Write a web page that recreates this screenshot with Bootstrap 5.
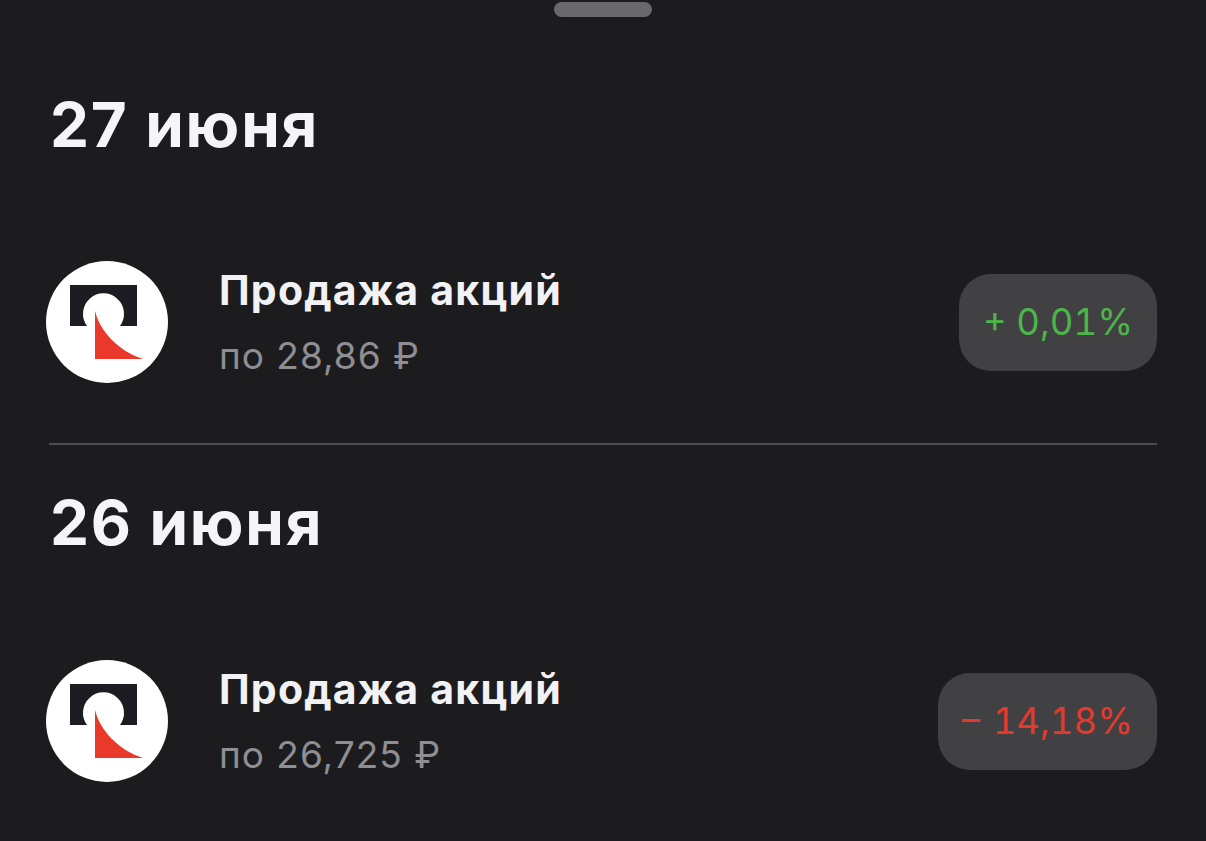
<!doctype html>
<html lang="ru">

<head>
    <meta charset="utf-8" />
    <meta name="viewport" content="width=device-width, initial-scale=1" />
    <title>Операции</title>
    <link href="https://cdn.jsdelivr.net/npm/bootstrap@5.3.5/dist/css/bootstrap.min.css" rel="stylesheet" />
    <style>
        body {
            background-color: #1c1c1e;
            font-family: Inter, "Noto Sans", sans-serif;
            overflow: hidden;
        }

        .sheet {
            height: 841px;
            padding: 0 49px;
        }

        .grabber {
            width: 98px;
            height: 15px;
            margin: 2px auto 0;
            background-color: #69696c;
            border-radius: 8px;
        }

        .day-title {
            font-size: 62px;
            line-height: 70px;
            font-weight: 700;
            letter-spacing: 1.8px;
            color: #f5f5f7;
            margin: 0 0 0 1px;
        }

        .first-title {
            padding-top: 73px;
        }

        .deal {
            margin-top: 101px;
            height: 122px;
            margin-left: -3px;
        }

        .second-title {
            margin-top: 43px;
        }

        .second-deal {
            margin-top: 102px;
        }

        .deal-logo {
            width: 122px;
            height: 122px;
            flex-shrink: 0;
        }

        .deal-info {
            margin-left: 51px;
        }

        .deal-name {
            font-size: 41px;
            line-height: 46px;
            font-weight: 700;
            letter-spacing: 1.2px;
            color: #f2f2f4;
        }

        .deal-price {
            font-size: 37px;
            line-height: 44px;
            letter-spacing: 1px;
            color: #8e8e93;
            margin-top: 21px;
        }

        .change-pill {
            height: 97px;
            padding: 0 24px;
            border-radius: 32px;
            background-color: #414143;
            font-size: 36.5px;
            font-variant-numeric: tabular-nums;
        }

        .change-up {
            color: #4cb648;
        }

        .change-down {
            color: #e5392e;
            word-spacing: 3px;
        }

        .day-line {
            height: 2px;
            margin-top: 60px;
            background-color: #4c4c4e;
        }
    </style>
</head>

<body>
    <div class="sheet">
        <div class="grabber"></div>

        <h2 class="day-title first-title">27 июня</h2>
        <div class="deal d-flex align-items-center">
            <svg class="deal-logo" viewBox="0 0 122 122">
                <circle cx="61" cy="61" r="61" fill="#fff" />
                <path d="M24 24H91V65H74A20.5 20.5 0 1 0 41 65H24Z" fill="#1c1c22" />
                <path d="M49 50C54 70 72 90 97 98H49Z" fill="#e8392a" />
            </svg>
            <div class="deal-info flex-grow-1">
                <div class="deal-name">Продажа акций</div>
                <div class="deal-price">по 28,86 ₽</div>
            </div>
            <div class="change-pill change-up d-flex align-items-center">+ 0,01%</div>
        </div>

        <div class="day-line"></div>

        <h2 class="day-title second-title">26 июня</h2>
        <div class="deal second-deal d-flex align-items-center">
            <svg class="deal-logo" viewBox="0 0 122 122">
                <circle cx="61" cy="61" r="61" fill="#fff" />
                <path d="M24 24H91V65H74A20.5 20.5 0 1 0 41 65H24Z" fill="#1c1c22" />
                <path d="M49 50C54 70 72 90 97 98H49Z" fill="#e8392a" />
            </svg>
            <div class="deal-info flex-grow-1">
                <div class="deal-name">Продажа акций</div>
                <div class="deal-price">по 26,725 ₽</div>
            </div>
            <div class="change-pill change-down d-flex align-items-center">– 14,18%</div>
        </div>
    </div>

    <script src="https://cdn.jsdelivr.net/npm/bootstrap@5.3.5/dist/js/bootstrap.bundle.min.js"></script>
</body>

</html>
